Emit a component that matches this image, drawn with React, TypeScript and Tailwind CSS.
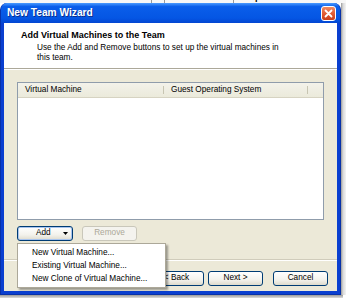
const font = "font-['Liberation_Sans',Arial,sans-serif]";

const menuItems = ['New Virtual Machine...', 'Existing Virtual Machine...', 'New Clone of Virtual Machine...'];

const XpButton = ({ label, disabled, focused, width = 'w-[55px]', align = 'justify-center', children }: any) => (
  <div
    className={`${width} h-[15px] rounded-[3px] border flex items-center ${align} text-[8.25px] leading-none ${
      disabled
        ? 'border-[#c9c7ba] bg-[#f4f3ee] text-[#aca899]'
        : 'border-[#003c74] bg-[linear-gradient(to_bottom,#ffffff,#f3f2ec_60%,#dedbcd)] text-black'
    } ${focused ? 'shadow-[inset_0_0_0_1px_#a8c4ef]' : ''}`}
  >
    {label}
    {children}
  </div>
);

export default function App() {
  return (
    <div className={`w-[346px] h-[303px] bg-white overflow-hidden ${font}`}>
      {/* bit of the window behind, cut off at the top */}
      <div className="h-[3px] overflow-hidden bg-[#f7f7f7]">
        <div className="flex h-[3px]">
          <div className="w-[151px]" />
          <div className="w-px bg-[#9a9a9a]" />
          <div className="w-[12px]" />
          <div className="w-px bg-[#9a9a9a]" />
          <div className="w-[68px] overflow-hidden">
            <div className="mt-[-8px] pl-[4px] text-[9px] font-bold text-black leading-[10px]">Devices</div>
          </div>
          <div className="w-px bg-[#9a9a9a]" />
          <div className="w-[60px] overflow-hidden">
            <div className="mt-[-8px] pl-[14px] text-[9px] font-bold text-black leading-[10px]">Options</div>
          </div>
        </div>
      </div>

      <div className="flex">
        {/* window */}
        <div className="w-[341px] h-[292px] rounded-t-[7px] bg-[#0a3fd0] flex flex-col overflow-hidden border-l border-r border-b border-[#0831a8]">
          {/* title bar */}
          <div className="h-[20px] flex items-center justify-between pl-[6px] pr-[4px] bg-[linear-gradient(to_bottom,#4b9bff,#0a5eea_18%,#0556e4_75%,#0346d2)]">
            <span className="text-white font-bold text-[10.2px] leading-none [text-shadow:1px_1px_0_#0b2f8f]">
              New Team Wizard
            </span>
            <div className="w-[15px] h-[15px] rounded-[3px] border border-white bg-[linear-gradient(to_bottom,#f08a62,#e05a32_55%,#c83e1a)] flex items-center justify-center">
              <svg width="9" height="9" viewBox="0 0 9 9">
                <path d="M1.5 1.5 L7.5 7.5 M7.5 1.5 L1.5 7.5" stroke="white" strokeWidth="1.8" strokeLinecap="round" />
              </svg>
            </div>
          </div>

          {/* client area */}
          <div className="mx-[3px] flex flex-col h-[268px] bg-[#ece9d8]">
            {/* header */}
            <div className="h-[45px] bg-white pl-[17px] pt-[7px]">
              <div className="text-[9px] font-bold text-black leading-[11px]">Add Virtual Machines to the Team</div>
              <div className="pl-[16px] pt-[2px] text-[8.25px] text-black leading-[10px]">
                Use the Add and Remove buttons to set up the virtual machines in
                <br />
                this team.
              </div>
            </div>
            <div className="h-px bg-[#aca899]" />
            <div className="h-px bg-white" />

            {/* body */}
            <div className="relative flex-1 flex flex-col">
              <div className="ml-[13px] mt-[12px] w-[307px] h-[138px] border border-[#8f9cab] bg-white flex flex-col">
                <div className="h-[15px] flex items-stretch bg-[linear-gradient(to_bottom,#f3f2ea,#ebeadb)] border-b border-[#d6d3c2] text-[8.25px] text-black">
                  <div className="w-[145px] flex items-center pl-[7px]">Virtual Machine</div>
                  <div className="w-px my-[3px] bg-[#c7c5b2]" />
                  <div className="w-[143px] flex items-center pl-[7px]">Guest Operating System</div>
                  <div className="w-px my-[3px] bg-[#c7c5b2]" />
                  <div className="flex-1" />
                </div>
              </div>

              <div className="flex ml-[13px] mt-[6px] gap-[9px]">
                <XpButton focused width="w-[56px]" align="justify-start">
                  <span className="ml-[18px]">Add</span>
                  <svg className="ml-[12px]" width="5" height="3" viewBox="0 0 5 3">
                    <path d="M0 0 H5 L2.5 3 Z" fill="#000" />
                  </svg>
                </XpButton>
                <XpButton label="Remove" disabled />
              </div>

              <div className="mt-[18px] h-px bg-[#d0ccbb]" />
              <div className="h-px bg-white" />

              <div className="flex justify-end pr-[9px] mt-[10px]">
                <XpButton label="< Back" />
                <div className="w-[4px]" />
                <XpButton label="Next >" />
                <div className="w-[10px]" />
                <XpButton label="Cancel" />
              </div>

              {/* drop-down menu */}
              <div className="absolute left-[13px] top-[173px] w-[149px] h-[45px] bg-white border border-[#aca899] shadow-[2px_2px_2px_rgba(0,0,0,0.35)] flex flex-col justify-center gap-[1px] pl-[14px] text-[8.25px] text-black leading-[12px]">
                {menuItems.map((m) => (
                  <div key={m}>{m}</div>
                ))}
              </div>
            </div>
          </div>
        </div>

        {/* desktop + shadow at the right */}
        <div className="flex-1 h-[292px] bg-[linear-gradient(to_right,#9a9a9a,#d8d8d8_40%,#f4f4f4)]" />
      </div>
      <div className="h-[3px] w-[343px] bg-[linear-gradient(to_bottom,#9a9a9a,#dcdcdc)]" />
    </div>
  );
}
